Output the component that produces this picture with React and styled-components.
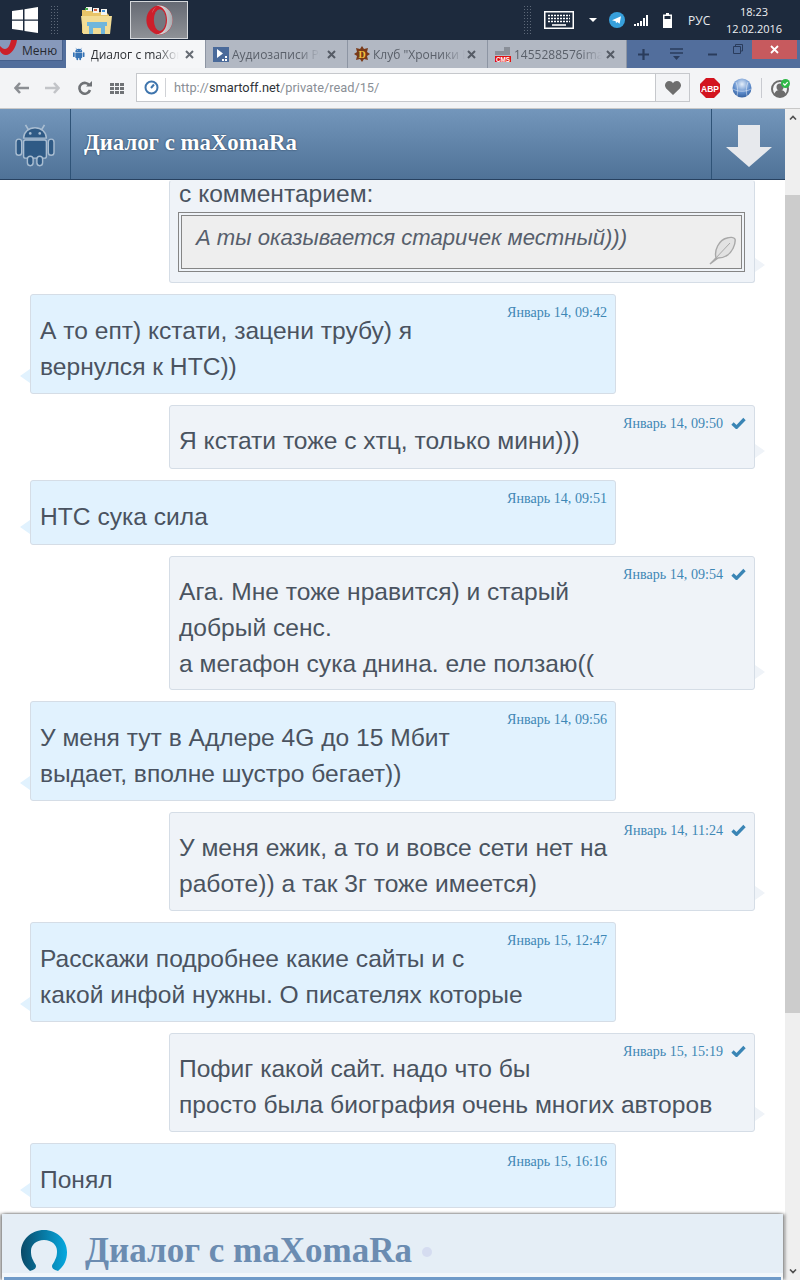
import React from "react";
import styled, { createGlobalStyle } from "styled-components";

const Global = createGlobalStyle`
  html, body { margin: 0; padding: 0; background: #fff; }
  body { font-family: "Liberation Sans", Arial, sans-serif; }
  * { box-sizing: border-box; }
`;

const Screen = styled.div`
  width: 800px; height: 1280px; display: flex; flex-direction: column; overflow: hidden;
`;

/* ---------- Windows taskbar ---------- */
const Taskbar = styled.div`
  height: 40px; flex: none; background: #1d2a3d; display: flex; align-items: center;
`;
const StartBtn = styled.div`
  width: 50px; padding-left: 12px; display: flex; align-items: center;
`;
const Grip = styled.div`
  width: 8px; height: 30px;
  background-image: radial-gradient(#5d6878 0.7px, transparent 0.8px);
  background-size: 3px 3px;
`;
const FolderWrap = styled.div`
  margin-left: 23px; width: 32px; display: flex; justify-content: center;
`;
const ActiveTask = styled.div`
  margin-left: 17px; width: 58px; height: 38px; background: linear-gradient(#666a74, #8e9196);
  border: 1px solid #d5d8dc; display: flex; align-items: center; justify-content: center;
`;
const Tray = styled.div`
  margin-left: auto; display: flex; align-items: center; height: 40px; color: #fff;
`;
const Keyboard = styled.div`
  margin-left: 13px; margin-right: 15px; display: flex;
`;
const TrayCaret = styled.div`
  width: 0; height: 0; border-left: 4px solid transparent; border-right: 4px solid transparent;
  border-top: 4px solid #fff; margin-right: 12px;
`;
const TrayIcon = styled.div`
  display: flex; margin-right: ${p => p.$mr || 0}px;
`;
const Lang = styled.div`
  font: 12px "Open Sans", sans-serif; width: 32px; color: #e8ebef;
`;
const Clock = styled.div`
  width: 68px; margin-right: 12px; text-align: center; font: 11px/17px "Open Sans", sans-serif; color: #eef0f3;
`;

/* ---------- Opera tab strip ---------- */
const TabStrip = styled.div`
  height: 28px; flex: none; background: #526e9c; display: flex; align-items: stretch;
`;
const MenuBtn = styled.div`
  width: 63px; height: 21px; margin-right: 3px; background: #8799bb; border: 1px solid #46608c; border-left: 0; border-top: 0;
  display: flex; align-items: center; overflow: hidden;
  font: 12px "Open Sans", sans-serif; color: #26292f;
`;
const MenuLogo = styled.svg`
  display: block; flex: none; align-self: flex-start; margin-right: 5px;
`;
const Tab = styled.div`
  width: ${p => p.$w}px; flex: none; display: flex; align-items: center; padding-left: ${p => p.$pl}px; position: relative;
  background: ${p => (p.$active ? "#f5f6f8" : "#b2b8c3")};
  border-right: 1px solid #8d95a3;
  font: 12px "Open Sans", sans-serif; color: ${p => (p.$active ? "#2c2f33" : "#5a606a")};
  white-space: nowrap; overflow: hidden;
`;
const TabLabel = styled.span`
  margin-left: ${p => p.$ml || 4}px; width: ${p => p.$w}px; overflow: hidden; flex: none;
  -webkit-mask-image: linear-gradient(to right, #000 75%, transparent 100%);
  mask-image: linear-gradient(to right, #000 75%, transparent 100%);
`;
const TabClose = styled.div`
  position: absolute; right: 11px; top: 10px; display: flex;
`;
const StripTools = styled.div`
  flex: 1; display: flex; align-items: center; position: relative;
`;
const StripIcon = styled.div`
  display: flex; margin-left: ${p => p.$ml}px; margin-top: ${p => p.$mt || 0}px;
`;
const CloseWin = styled.div`
  position: absolute; right: 3px; top: 0; width: 45px; height: 19px; background: #c75a5e;
  display: flex; align-items: center; justify-content: center;
`;

/* ---------- Address bar ---------- */
const AddressBar = styled.div`
  height: 41px; flex: none; background: #f3f4f6; border-bottom: 1px solid #c8c8c8; display: flex; align-items: center;
`;
const NavIcon = styled.div`
  display: flex; margin-left: ${p => p.$ml}px;
`;
const UrlBox = styled.div`
  width: 520px; height: 29px; margin-left: 12px; margin-top: -1px; background: #fff; border: 1px solid #c6c8cc; display: flex; align-items: center;
`;
const UrlIcon = styled.div`
  width: 29px; height: 19px; display: flex; align-items: center; justify-content: center; border-right: 1px solid #d0d2d6; flex: none;
`;
const UrlText = styled.div`
  font: 12.8px Roboto, sans-serif; margin-left: 8px; color: #8a8f96; white-space: nowrap;
  b { font-weight: 400; color: #2f3338; }
`;
const HeartBox = styled.div`
  width: 34px; height: 29px; margin-top: -1px; background: #f3f4f6; border: 1px solid #c6c8cc; border-left: 0; display: flex; align-items: center; justify-content: center;
`;
const VSep = styled.div`
  width: 1px; height: 20px; background: #c8cad0; margin-left: 9px;
`;

/* ---------- Page ---------- */
const Viewport = styled.div`
  flex: 1; min-height: 0; display: flex; position: relative; overflow: hidden;
`;
const Page = styled.div`
  width: 785px; flex: none; display: flex; flex-direction: column; overflow: hidden;
`;
const SiteHeader = styled.div`
  height: 71px; flex: none; display: flex; align-items: stretch; color: #fff;
  background: linear-gradient(#7396bb, #4f7297);
  border-bottom: 1px solid #274160;
`;
const LogoCell = styled.div`
  width: 71px; flex: none; display: flex; align-items: center; justify-content: center; border-right: 1px solid #2f5377;
`;
const HeaderTitle = styled.div`
  flex: 1; padding-left: 13px; display: flex; align-items: center;
  font: bold 22.8px "Liberation Serif", "Times New Roman", serif; color: #fff;
  text-shadow: 0 0 2px #24374f; padding-bottom: 3px;
`;
const ArrowCell = styled.div`
  width: 74px; flex: none; display: flex; align-items: center; justify-content: center; border-left: 1px solid #2f5377;
  padding-top: 3px;
`;

const Messages = styled.div`
  display: flex; flex-direction: column; gap: 11px; padding-bottom: 12px;
`;
const Bubble = styled.div`
  position: relative; flex: none; width: 586px; margin-left: ${p => (p.$out ? 169 : 30)}px;
  height: calc(29.5px + 35px * ${p => p.$lines});
  padding: 17.5px 9px 0;
  background: ${p => (p.$out ? "#eff3f8" : "#e1f2fe")};
  border: 1px solid #d5dde6;
  border-radius: 3px;
  font-size: 24.6px; line-height: 36px; color: #4a5360;
  &::after {
    content: ""; position: absolute; bottom: 10px; width: 0; height: 0;
    border-top: 7px solid transparent; border-bottom: 7px solid transparent;
    ${p => p.$out
      ? `right: -11px; border-left: 10px solid #eff3f8;`
      : `left: -11px; border-right: 10px solid #e1f2fe;`}
  }
`;
const CutBubble = styled(Bubble)`
  height: 103px; padding: 0 9px 10px 8px; border-top-color: transparent;
  > div:first-child { margin-top: -5px; padding-left: 1px; }
`;
const Stamp = styled.div`
  position: absolute; top: 9px; right: 8px; display: flex; align-items: center; gap: 8px;
  font: 14.1px/16px "Liberation Serif", "Times New Roman", serif; color: #3e87b5;
`;
const Quote = styled.div`
  height: 60px; border: 1px solid #858585; padding: 2px; position: relative;
`;
const QuoteInner = styled.div`
  height: 54px; border: 1px solid #858585; background: #eeeeee; padding: 4px 14px;
  font-style: italic; font-size: 22.1px; line-height: 36px; color: #575f6c;
`;
const Feather = styled.div`
  position: absolute; right: 7px; bottom: 6px; display: flex;
`;

const Scrollbar = styled.div`
  width: 15px; flex: none; background: #efefef; display: flex; flex-direction: column; align-items: center;
`;
const ScrollBtn = styled.div`
  height: 17px; padding-top: 6px; display: flex; margin-top: ${p => (p.$end ? "auto" : "0")};
`;
const Thumb = styled.div`
  width: 15px; height: 818px; margin-top: 69px; background: #cccccc;
`;

const Footer = styled.div`
  position: absolute; left: 2px; right: 17px; bottom: 0; height: 66px; background: #e5eef6;
  box-shadow: -2px 0 3px rgba(0,0,0,.45), 2px 0 3px rgba(0,0,0,.45); display: flex; flex-direction: column;
`;
const FooterRow = styled.div`
  height: 59px; display: flex; align-items: center; padding: 14px 0 0 19px;
`;
const FooterTitle = styled.div`
  margin-left: 18px; font: bold 35px "Liberation Serif", "Times New Roman", serif; color: #6b8cb1; white-space: nowrap;
`;
const Dot = styled.div`
  width: 10px; height: 10px; border-radius: 50%; background: #d5dcf0; margin-left: 10px; margin-top: 2px;
`;
const FooterEdge = styled.div`
  height: 7px; background: #f2f7fb; position: relative;
  &::after { content: ""; position: absolute; left: 2px; right: 2px; bottom: 0; height: 3px; background: #6f9ac8; }
`;

const Ic = ({ w, h, children, vb }) => (
  <svg width={w} height={h} viewBox={vb || `0 0 ${w} ${h}`} style={{ display: "block" }}>{children}</svg>
);

const Android = ({ s = 16, c = "#3573b5", stroke, sw }) => (
  <svg width={s} height={s * 1.15} viewBox="0 0 40 46" style={{ display: "block", overflow: "visible" }}>
    <path d="M13 8 10 3M27 8l3-5" stroke={stroke || c} strokeWidth={stroke ? 1.8 : 1.5} />
    <g fill={c} stroke={stroke} strokeWidth={sw}>
      <path d="M8 17a12 11 0 0 1 24 0z" />
      <rect x="8" y="19" width="24" height="19" rx="2" />
      <rect x="0" y="18" width="6" height="17" rx="3" />
      <rect x="34" y="18" width="6" height="17" rx="3" />
      <rect x="12" y="36" width="6" height="10" rx="3" />
      <rect x="22" y="36" width="6" height="10" rx="3" />
    </g>
    <circle cx="15" cy="12" r="1.4" fill={stroke || "#fff"} />
    <circle cx="25" cy="12" r="1.4" fill={stroke || "#fff"} />
  </svg>
);

const X = ({ s = 9, c = "#555b65", sw = 2 }) => (
  <Ic w={s} h={s}><path d={`M1 1 ${s - 1} ${s - 1}M${s - 1} 1 1 ${s - 1}`} stroke={c} strokeWidth={sw} fill="none" /></Ic>
);

const Check = () => (
  <Ic w={15} h={12}><path d="M1.5 6.500 5.500 10.300 13.500 2" fill="none" stroke="#3a85b5" strokeWidth="3.300" /></Ic>
);

const OperaO = ({ s = 32 }) => (
  <svg width={s * 0.9} height={s} viewBox="0 0 36 40" style={{ display: "block" }}>
    <defs>
      <linearGradient id="opr" x1="0" x2="1"><stop offset="0" stopColor="#e8e9ea" /><stop offset="1" stopColor="#a9acb1" /></linearGradient>
    </defs>
    <ellipse cx="18" cy="20" rx="17.500" ry="19.500" fill="#cc1f2b" />
    <path d="M14 1C24 -1 35.500 7 35.500 20S24 41 14 39c8 0 14-8 14-19S22 1 14 1z" fill="url(#opr)" />
    <path d="M8 11c1-5 4-8 8-9-4 1-6 4-8 9z" fill="#f4c9cc" />
    <ellipse cx="18.500" cy="20" rx="8" ry="14.500" fill="#74777f" />
  </svg>
);

const messages = [
  { id: 1, out: false, stamp: "Январь 14, 09:42", lines: ["А то епт) кстати, зацени трубу) я", "вернулся к HTC))"] },
  { id: 2, out: true, stamp: "Январь 14, 09:50", lines: ["Я кстати тоже с хтц, только мини)))"] },
  { id: 3, out: false, stamp: "Январь 14, 09:51", lines: ["HTC сука сила"] },
  { id: 4, out: true, stamp: "Январь 14, 09:54", lines: ["Ага. Мне тоже нравится) и старый", "добрый сенс.", "а мегафон сука днина. еле ползаю(("] },
  { id: 5, out: false, stamp: "Январь 14, 09:56", lines: ["У меня тут в Адлере 4G до 15 Мбит", "выдает, вполне шустро бегает))"] },
  { id: 6, out: true, stamp: "Январь 14, 11:24", lines: ["У меня ежик, а то и вовсе сети нет на", "работе)) а так 3г тоже имеется)"] },
  { id: 7, out: false, stamp: "Январь 15, 12:47", lines: ["Расскажи подробнее какие сайты и с", "какой инфой нужны. О писателях которые"] },
  { id: 8, out: true, stamp: "Январь 15, 15:19", lines: ["Пофиг какой сайт. надо что бы", "просто была биография очень многих авторов"] },
  { id: 9, out: false, stamp: "Январь 15, 16:16", lines: ["Понял"] },
];

const Line = styled.div`white-space: nowrap;`;

export default function App() {
  return (
    <Screen>
      <Global />
      <Taskbar>
        <StartBtn>
          <Ic w={26} h={26}><path d="M0 4 11 2.400V12.400H0zM12.500 2.200 26 0V12.400H12.500zM0 13.800H11V23.600L0 22zM12.500 13.800H26V26L12.500 24z" fill="#fff" /></Ic>
        </StartBtn>
        <Grip />
        <FolderWrap>
          <Ic w={32} h={30}>
            <path d="M1 5h9l2 2h13l3 3v18H1z" fill="#e8c468" />
            <path d="M5 2h6v4H5zM12 3h6v5h-6zM20 4h6v6h-6z" fill="#f4f4ee" />
            <path d="M4 3h3v2H4z" fill="#4cb04c" /><path d="M13 4h3v2h-3z" fill="#d9593d" /><path d="M21 5h3v2h-3z" fill="#3f8fd8" />
            <path d="M0 11h31l-2 18H2z" fill="#f2dc95" />
            <path d="M6 17h20v4h-2v8h-4v-6h-8v6H8v-8H6z" fill="#6fb6dc" />
          </Ic>
        </FolderWrap>
        <ActiveTask><OperaO s={30} /></ActiveTask>
        <Tray>
          <Grip />
          <Keyboard>
            <Ic w={30} h={18}>
              <rect x=".75" y=".75" width="28.500" height="16.500" fill="#1d2a3d" stroke="#fff" strokeWidth="1.500" />
              <path d="M4 4.500h22M4 7.500h22M4 10.500h22" stroke="#fff" strokeWidth="1.600" strokeDasharray="2 1" />
              <path d="M8 14h14" stroke="#fff" strokeWidth="1.600" />
            </Ic>
          </Keyboard>
          <TrayCaret />
          <TrayIcon $mr={9}>
            <Ic w={16} h={16}>
              <circle cx="8" cy="8" r="8" fill="#37a0dc" />
              <path d="M3 8.200 12 4.300 10.600 11.800 8.200 10 7 11.200 6.700 9.200 3 8.200z" fill="#fff" />
            </Ic>
          </TrayIcon>
          <TrayIcon $mr={14}>
            <Ic w={15} h={11}><path d="M0 9h2v2H0zM3 8h2v3H3zM6 6h2v5H6zM9 3h2v8H9zM12 0h2v11h-2z" fill="#fff" /></Ic>
          </TrayIcon>
          <TrayIcon $mr={16}>
            <Ic w={9} h={15}><path d="M3 0h3v1.500h3V15H0V1.500h3z" fill="#fff" /><rect x="1.500" y="3" width="6" height="3" fill="#1d2a3d" /></Ic>
          </TrayIcon>
          <Lang>РУС</Lang>
          <Clock>18:23<br />12.02.2016</Clock>
        </Tray>
      </Taskbar>

      <TabStrip>
        <MenuBtn>
          <MenuLogo width="17" height="16" viewBox="0 0 17 16">
            <path d="M17 0C16 8 11 15 6 15 3 15 1 13 0 11V6C2 8 3 9 5 9 8 9 10 5 11 0z" fill="#cc2029" />
          </MenuLogo>
          Меню
        </MenuBtn>
        <Tab $w={140} $pl={7} $active>
          <Android s={11.500} />
          <TabLabel $w={88} $ml={6}>Диалог с maXomaRa</TabLabel>
          <TabClose><X c="#666c74" /></TabClose>
        </Tab>
        <Tab $w={142} $pl={7}>
          <Ic w={16} h={15}>
            <rect width="16" height="15" fill="#4a6a9a" />
            <path d="M4 2v9l6-4.500z" fill="#fff" />
            <path d="M9 12h2v2H9zM12 12h2v2h-2zM12 9h2v2h-2z" fill="#fff" />
          </Ic>
          <TabLabel $w={88} $ml={3}>Аудиозаписи Ро</TabLabel>
          <TabClose><X /></TabClose>
        </Tab>
        <Tab $w={140} $pl={6}>
          <Ic w={16} h={16}>
            <path d="M8 0 10 3 14 2 13 6 16 8 13 10 14 14 10 13 8 16 6 13 2 14 3 10 0 8 3 6 2 2 6 3z" fill="#7a3a18" />
            <text x="8" y="11.500" fontSize="10" fontWeight="bold" textAnchor="middle" fill="#f0c040" fontFamily="Liberation Serif">D</text>
          </Ic>
          <TabLabel $w={92} $ml={3}>Клуб "Хроники Е</TabLabel>
          <TabClose><X /></TabClose>
        </Tab>
        <Tab $w={139} $pl={7}>
          <Ic w={16} h={15}>
            <path d="M0 4h9V0h6v8H0z" fill="#8a8f98" />
            <rect y="9" width="16" height="6" fill="#e01010" />
            <text x="8" y="14.500" fontSize="6.400" fontWeight="bold" textAnchor="middle" fill="#fff" fontFamily="Liberation Sans">CMS</text>
          </Ic>
          <TabLabel $w={88} $ml={3}>1455288576image</TabLabel>
          <TabClose><X /></TabClose>
        </Tab>
        <StripTools>
          <StripIcon $ml={11}>
            <Ic w={11} h={11}><path d="M0 5.500h11M5.500 0v11" stroke="#2a3c5c" strokeWidth="2.200" /></Ic>
          </StripIcon>
          <StripIcon $ml={21}>
            <Ic w={13} h={12}><path d="M0 1h13M0 5h13" stroke="#2a3c5c" strokeWidth="1.600" /><path d="M3 8h7l-3.500 4z" fill="#2a3c5c" /></Ic>
          </StripIcon>
          <StripIcon $ml={25}>
            <Ic w={9} h={3}><path d="M0 1.500h9" stroke="#2a3c5c" strokeWidth="2" /></Ic>
          </StripIcon>
          <StripIcon $ml={16} $mt={-10}>
            <Ic w={10} h={10}><path d="M2.500 2.500V.5h7v6.500h-2M.5 2.500h7V9.500H.5z" fill="none" stroke="#2a3c5c" strokeWidth="1" /></Ic>
          </StripIcon>
          <CloseWin><X s={9} c="#fff" sw={1.800} /></CloseWin>
        </StripTools>
      </TabStrip>

      <AddressBar>
        <NavIcon $ml={14}>
          <Ic w={15} h={12}><path d="M6 1 1.500 6 6 11M2 6h13" fill="none" stroke="#8b8e93" strokeWidth="2.600" /></Ic>
        </NavIcon>
        <NavIcon $ml={16}>
          <Ic w={15} h={12}><path d="M9 1l4.500 5L9 11M13 6H0" fill="none" stroke="#c2c4c8" strokeWidth="2.600" /></Ic>
        </NavIcon>
        <NavIcon $ml={18}>
          <Ic w={14} h={14}><path d="M11.500 4.500A5.400 5.400 0 1 0 12 9" fill="none" stroke="#6f7276" strokeWidth="2.600" /><path d="M8 5.500h6V0z" fill="#6f7276" /></Ic>
        </NavIcon>
        <NavIcon $ml={18}>
          <Ic w={14} h={11}><path d="M0 0h4v3H0zM5 0h4v3H5zM10 0h4v3h-4zM0 4h4v3H0zM5 4h4v3H5zM10 4h4v3h-4zM0 8h4v3H0zM5 8h4v3H5zM10 8h4v3h-4z" fill="#6f7276" /></Ic>
        </NavIcon>
        <UrlBox>
          <UrlIcon>
            <Ic w={15} h={15}><circle cx="7.500" cy="7.500" r="6" fill="none" stroke="#3f75ad" strokeWidth="2" /><path d="M7 8l3-3.500" stroke="#3f75ad" strokeWidth="2" /></Ic>
          </UrlIcon>
          <UrlText>http://<b>smartoff.net</b>/private/read/15/</UrlText>
        </UrlBox>
        <HeartBox>
          <Ic w={16} h={14}><path d="M8 14 1.200 7.400C-1.500 4.500.6 0 4.200 0 5.800 0 7.200.8 8 2.200 8.800.8 10.200 0 11.800 0c3.600 0 5.700 4.500 3 7.400z" fill="#6e6e6e" /></Ic>
        </HeartBox>
        <NavIcon $ml={10}>
          <Ic w={20} h={20}>
            <path d="M6 0h8l6 6v8l-6 6H6l-6-6V6z" fill="#d3141f" />
            <text x="10" y="13.500" fontSize="8.500" fontWeight="bold" textAnchor="middle" fill="#fff" fontFamily="Liberation Sans">ABP</text>
          </Ic>
        </NavIcon>
        <NavIcon $ml={12}>
          <Ic w={20} h={20}>
            <defs><radialGradient id="gl" cx=".5" cy=".3" r=".8"><stop offset="0" stopColor="#e4eefa" /><stop offset=".55" stopColor="#5f8dcc" /><stop offset="1" stopColor="#25508f" /></radialGradient></defs>
            <circle cx="10" cy="10" r="9.500" fill="url(#gl)" />
            <path d="M1 11c5 3 13 3 18 0M4 4c2 5 2 10 1 14M16 4c-2 5-2 10-1 14" fill="none" stroke="#fff" strokeOpacity=".45" />
          </Ic>
        </NavIcon>
        <VSep />
        <NavIcon $ml={9}>
          <Ic w={19} h={19}>
            <circle cx="9" cy="10" r="8" fill="none" stroke="#6c6c6c" strokeWidth="2" />
            <circle cx="9" cy="8" r="3.500" fill="#6c6c6c" />
            <path d="M3 16c1-4 3-5 6-5s5 1 6 5c-3 2.500-9 2.500-12 0z" fill="#6c6c6c" />
            <circle cx="14.500" cy="4.500" r="4.500" fill="#2eb847" />
            <path d="M12.300 4.500l1.600 1.600 2.800-3" fill="none" stroke="#fff" strokeWidth="1.300" />
          </Ic>
        </NavIcon>
      </AddressBar>

      <Viewport>
        <Page>
          <SiteHeader>
            <LogoCell>
              <Android s={38} c="#2f5a85" stroke="#a9bdd1" sw="1.500" />
            </LogoCell>
            <HeaderTitle>Диалог с maXomaRa</HeaderTitle>
            <ArrowCell>
              <Ic w={46} h={42}>
                <path d="M12 0h22v22h12L23 42 0 22h12z" fill="#e7e9ed" />
              </Ic>
            </ArrowCell>
          </SiteHeader>
          <Messages>
            <CutBubble $out $lines={2}>
              <Line>с комментарием:</Line>
              <Quote>
                <QuoteInner>А ты оказывается старичек местный)))</QuoteInner>
                <Feather>
                  <Ic w={28} h={29}>
                    <path d="M1 28 7 22C5 14 10 4 18 2c3-1 7-1 8 1 1 5-3 14-9 17-3 2-6 2-8 2z" fill="#e2e2e2" stroke="#a8a8a8" strokeWidth="1.400" />
                    <path d="M5 24 21 7" stroke="#a8a8a8" strokeWidth="1" />
                  </Ic>
                </Feather>
              </Quote>
            </CutBubble>
            {messages.map(m => (
              <Bubble key={m.id} $out={m.out} $lines={m.lines.length}>
                <Stamp>{m.stamp}{m.out && <Check />}</Stamp>
                {m.lines.map(l => <Line key={l}>{l}</Line>)}
              </Bubble>
            ))}
          </Messages>
        </Page>
        <Scrollbar>
          <ScrollBtn>
            <Ic w={8} h={5}><path d="M1 4.500 4 1.500l3 3" fill="none" stroke="#505050" strokeWidth="1.600" /></Ic>
          </ScrollBtn>
          <Thumb />
          <ScrollBtn $end>
            <Ic w={8} h={5}><path d="M1 .5 4 3.500l3-3" fill="none" stroke="#505050" strokeWidth="1.600" /></Ic>
          </ScrollBtn>
        </Scrollbar>
        <Footer>
          <FooterRow>
            <svg width="46" height="42" viewBox="0 0 46 42" style={{ display: "block", flex: "none" }}>
              <defs><linearGradient id="av" x1="0" x2="1"><stop offset="0" stopColor="#0a4a68" /><stop offset="1" stopColor="#06a9e0" /></linearGradient></defs>
              <path d="M9 41C3 36 0 30 0 22 0 10 10 0 23 0s23 10 23 22c0 8-3 14-9 19-3-1-6-2-6-5 0-2 2-3 3-6 1-2 2-4 2-9 0-6-5-11-13-11S10 15 10 21c0 5 1 7 2 9 1 3 3 4 3 6 0 3-3 4-6 5z" fill="url(#av)" />
            </svg>
            <FooterTitle>Диалог с maXomaRa</FooterTitle>
            <Dot />
          </FooterRow>
          <FooterEdge />
        </Footer>
      </Viewport>
    </Screen>
  );
}
